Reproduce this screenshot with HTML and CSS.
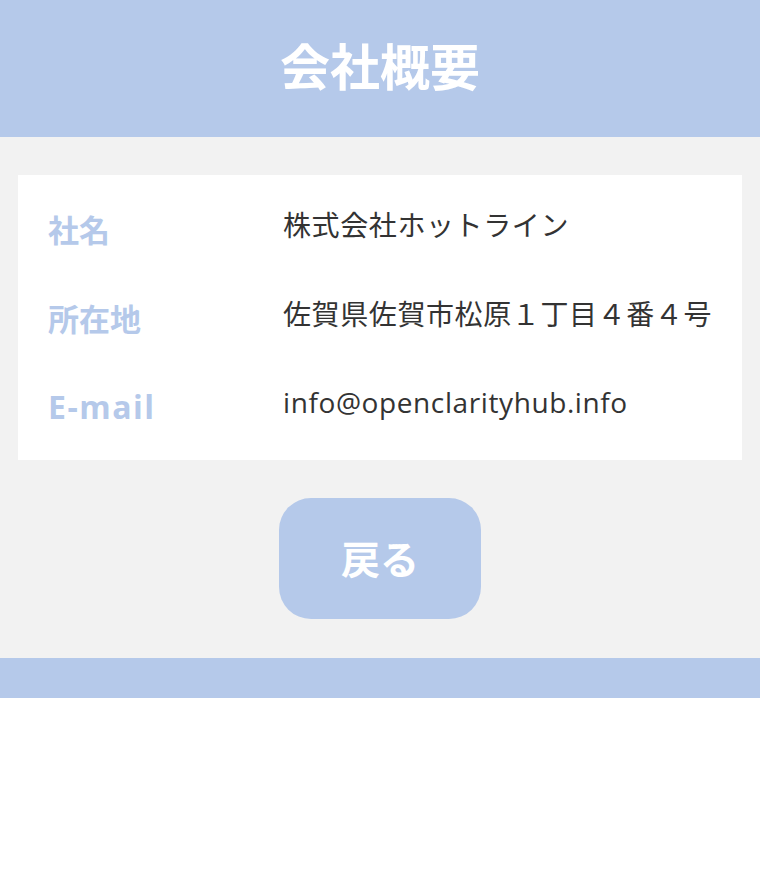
FILE: index.html
```html
<!DOCTYPE html>
<html lang="ja">

<head>
    <meta charset="UTF-8">
    <meta name="viewport" content="width=device-width, initial-scale=1.0">
    <title>会社概要</title>
    <link rel="stylesheet" href="styles.css">
</head>

<body>
    <header class="header">
        <h1>会社概要</h1>
    </header>

    <main class="main">
        <div class="info">
            <div class="row">
                <div class="label">社名</div>
                <div class="value">株式会社ホットライン</div>
            </div>
            <div class="row">
                <div class="label">所在地</div>
                <div class="value">佐賀県佐賀市松原１丁目４番４号</div>
            </div>
            <div class="row">
                <div class="label latin">E-mail</div>
                <div class="value">info@openclarityhub.info</div>
            </div>
        </div>
        <div class="back">
            <a href="#" class="back-button">戻る</a>
        </div>
    </main>

    <footer class="footer"></footer>
</body>

</html>
```

FILE: styles.css
```css
body {
    margin: 0;
    font-family: 'Open Sans', 'Noto Sans CJK JP', sans-serif;
    background-color: #ffffff;
    color: #333;
}

.header {
    background-color: #b5c9ea;
    height: 137px;
    display: flex;
    justify-content: center;
    align-items: center;
}

.header h1 {
    margin: 0 0 8px;
    color: #ffffff;
    font-size: 50px;
    font-weight: bold;
}

.main {
    background-color: #f2f2f2;
    padding: 38px 18px 39px;
}

.info {
    background-color: #ffffff;
    padding: 9px 0;
}

.row {
    display: flex;
    align-items: center;
    height: 89px;
}

.label {
    width: 235px;
    padding-left: 30px;
    color: #b5c9ea;
    font-size: 31px;
    font-weight: bold;
}

.label.latin {
    font-size: 32px;
    letter-spacing: 1.5px;
}

.value {
    font-size: 28px;
    letter-spacing: 0.6px;
    margin-top: -10px;
}

.back {
    display: flex;
    justify-content: center;
    margin-top: 38px;
}

.back-button {
    display: flex;
    justify-content: center;
    align-items: center;
    width: 202px;
    height: 121px;
    border-radius: 32px;
    background-color: #b5c9ea;
    color: #ffffff;
    font-size: 39px;
    font-weight: bold;
    text-decoration: none;
    padding-bottom: 4px;
    box-sizing: border-box;
}

.footer {
    background-color: #b5c9ea;
    height: 40px;
}
```
